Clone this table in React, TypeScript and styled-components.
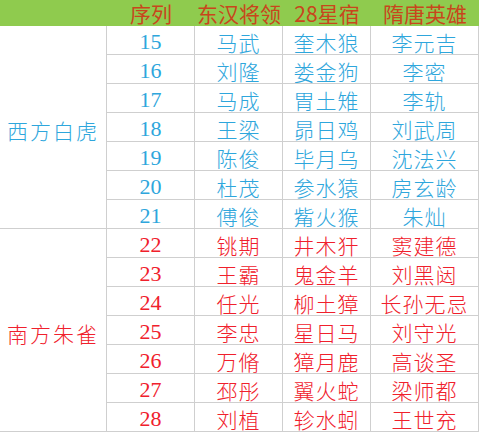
import React from "react";
import styled, { createGlobalStyle } from "styled-components";

const Global = createGlobalStyle`
  html, body { margin: 0; padding: 0; background: #ffffff; }
  body { width: 481px; height: 434px; overflow: hidden; }
`;

const Sheet = styled.div`
  display: grid;
  grid-template-columns: 107px 88px 88px 88px 108px;
  grid-template-rows: 26px repeat(14, 29px);
  width: 481px;
  font-family: "Noto Sans CJK SC", "Liberation Serif", serif;
  font-weight: 300;
`;

const HeadCell = styled.div`
  background: #8fcb4e;
  color: #c8461c;
  font-size: 21px;
  font-weight: 400;
  line-height: 1;
  white-space: nowrap;
  display: flex;
  align-items: center;
  justify-content: center;
`;

const GroupCell = styled.div<{ $color: string; $row: number }>`
  grid-column: 1;
  grid-row: ${(p) => p.$row} / span 7;
  border-right: 1px solid #cfcfcf;
  border-bottom: 1px solid #cfcfcf;
  color: ${(p) => p.$color};
  font-size: 21px;
  letter-spacing: 2px;
  display: flex;
  align-items: center;
  justify-content: center;
  padding-top: 6px;
  box-sizing: border-box;
`;

const Cell = styled.div<{ $color: string }>`
  border-right: 1px solid #cfcfcf;
  border-bottom: 1px solid #cfcfcf;
  color: ${(p) => p.$color};
  font-size: 21px;
  display: flex;
  align-items: center;
  justify-content: center;
  padding-top: 3px;
  box-sizing: border-box;
  white-space: nowrap;
  letter-spacing: 1px;
`;

const NumCell = styled(Cell)`
  grid-column: 2;
  font-family: "Liberation Serif", serif;
  font-weight: 400;
  font-size: 22px;
  letter-spacing: 0;
`;

const BLUE = "#2ea6dc";
const RED = "#f0202c";

const rows: [string, string, string, string][] = [
  ["15", "马武", "奎木狼", "李元吉"],
  ["16", "刘隆", "娄金狗", "李密"],
  ["17", "马成", "胃土雉", "李轨"],
  ["18", "王梁", "昴日鸡", "刘武周"],
  ["19", "陈俊", "毕月乌", "沈法兴"],
  ["20", "杜茂", "参水猿", "房玄龄"],
  ["21", "傅俊", "觜火猴", "朱灿"],
  ["22", "铫期", "井木犴", "窦建德"],
  ["23", "王霸", "鬼金羊", "刘黑闼"],
  ["24", "任光", "柳土獐", "长孙无忌"],
  ["25", "李忠", "星日马", "刘守光"],
  ["26", "万脩", "獐月鹿", "高谈圣"],
  ["27", "邳彤", "翼火蛇", "梁师都"],
  ["28", "刘植", "轸水蚓", "王世充"],
];

export default function App() {
  return (
    <>
      <Global />
      <Sheet>
        <HeadCell />
        <HeadCell>序列</HeadCell>
        <HeadCell>东汉将领</HeadCell>
        <HeadCell>28星宿</HeadCell>
        <HeadCell>隋唐英雄</HeadCell>
        <GroupCell $color={BLUE} $row={2}>西方白虎</GroupCell>
        <GroupCell $color={RED} $row={9}>南方朱雀</GroupCell>
        {rows.map((r, i) => {
          const color = i < 7 ? BLUE : RED;
          return (
            <React.Fragment key={r[0]}>
              <NumCell $color={color}>{r[0]}</NumCell>
              <Cell $color={color}>{r[1]}</Cell>
              <Cell $color={color}>{r[2]}</Cell>
              <Cell $color={color}>{r[3]}</Cell>
            </React.Fragment>
          );
        })}
      </Sheet>
    </>
  );
}
